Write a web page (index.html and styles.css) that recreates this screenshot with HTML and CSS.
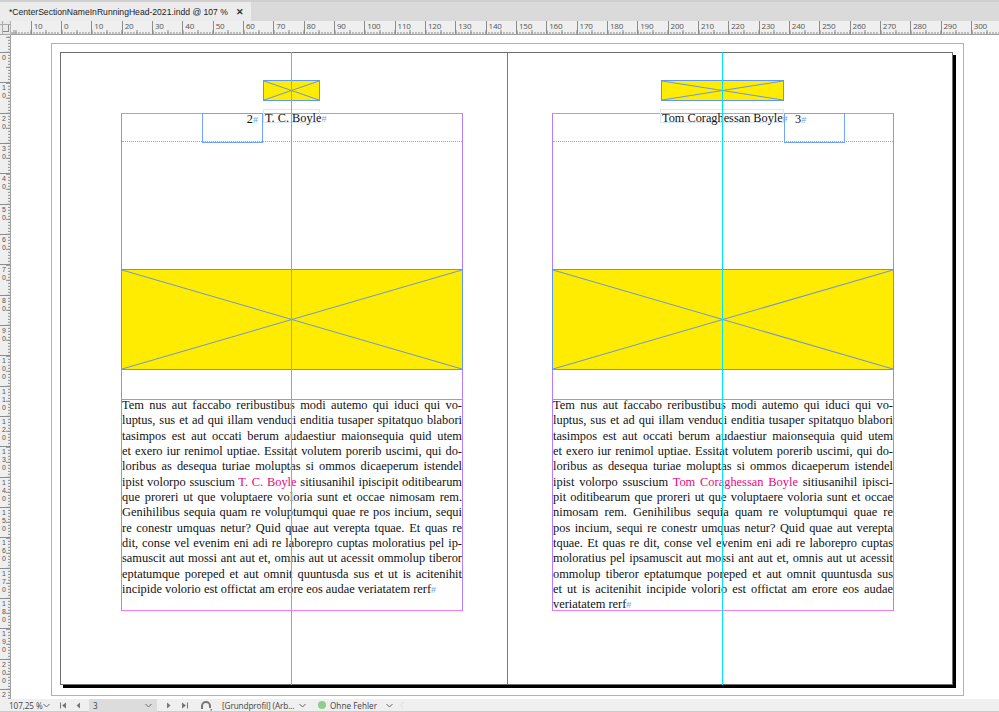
FILE: index.html
```html
<!DOCTYPE html>
<html>
<head>
<meta charset="utf-8">
<link rel="stylesheet" href="styles.css">
</head>
<body>
<div class="app">
  <div class="tabbar">
    <div class="tab"><span class="tab-title">*CenterSectionNameInRunningHead-2021.indd @ 107 %</span><span class="tab-close">&#x2715;</span></div>
  </div>
  <div class="hrow">
    <div class="corner"><svg width="11" height="14" viewBox="0 0 11 14"><rect x="2.5" y="3.5" width="6" height="7" fill="none" stroke="#8a8a8a"/><line x1="0" y1="3.5" x2="11" y2="3.5" stroke="#aaa"/><line x1="2.5" y1="0" x2="2.5" y2="14" stroke="#aaa"/></svg></div>
    <div class="hruler">
      <div class="hspacer"></div>
      <div class="hcell">10</div><div class="hcell">0</div><div class="hcell">10</div><div class="hcell">20</div><div class="hcell">30</div><div class="hcell">40</div><div class="hcell">50</div><div class="hcell">60</div><div class="hcell">70</div><div class="hcell">80</div><div class="hcell">90</div><div class="hcell">100</div><div class="hcell">110</div><div class="hcell">120</div><div class="hcell">130</div><div class="hcell">140</div><div class="hcell">150</div><div class="hcell">160</div><div class="hcell">170</div><div class="hcell">180</div><div class="hcell">190</div><div class="hcell">200</div><div class="hcell">210</div><div class="hcell">220</div><div class="hcell">230</div><div class="hcell">240</div><div class="hcell">250</div><div class="hcell">260</div><div class="hcell">270</div><div class="hcell">280</div><div class="hcell">290</div><div class="hcell">300</div><div class="hcell"></div>
    </div>
  </div>
  <div class="work">
    <div class="vruler">
      <div class="vspacer"></div>
      <div class="vcell"><span>0</span></div>
      <div class="vcell"><span>1</span><span>0</span></div>
      <div class="vcell"><span>2</span><span>0</span></div>
      <div class="vcell"><span>3</span><span>0</span></div>
      <div class="vcell"><span>4</span><span>0</span></div>
      <div class="vcell"><span>5</span><span>0</span></div>
      <div class="vcell"><span>6</span><span>0</span></div>
      <div class="vcell"><span>7</span><span>0</span></div>
      <div class="vcell"><span>8</span><span>0</span></div>
      <div class="vcell"><span>9</span><span>0</span></div>
      <div class="vcell"><span>1</span><span>0</span><span>0</span></div>
      <div class="vcell"><span>1</span><span>1</span><span>0</span></div>
      <div class="vcell"><span>1</span><span>2</span><span>0</span></div>
      <div class="vcell"><span>1</span><span>3</span><span>0</span></div>
      <div class="vcell"><span>1</span><span>4</span><span>0</span></div>
      <div class="vcell"><span>1</span><span>5</span><span>0</span></div>
      <div class="vcell"><span>1</span><span>6</span><span>0</span></div>
      <div class="vcell"><span>1</span><span>7</span><span>0</span></div>
      <div class="vcell"><span>1</span><span>8</span><span>0</span></div>
      <div class="vcell"><span>1</span><span>9</span><span>0</span></div>
      <div class="vcell"><span>2</span><span>0</span><span>0</span></div>
      <div class="vcell"><span>2</span><span>1</span><span>0</span></div>
    </div>
    <div class="canvas">
      <div class="bleed">
        <div class="spread">
          <div class="page page-left">
            <div class="margin-box"></div>
            <div class="dotted"></div>
            <div class="frame-y small">
              <svg class="x" viewBox="0 0 100 100" preserveAspectRatio="none"><line x1="0" y1="0" x2="100" y2="100"/><line x1="100" y1="0" x2="0" y2="100"/></svg>
            </div>
            <div class="num-frame"><div class="num-text">2<span class="hid">#</span></div></div>
            <div class="title-frame"><div class="title-text">T. C. Boyle<span class="hid">#</span></div></div>
            <div class="frame-y big">
              <svg class="x" viewBox="0 0 100 100" preserveAspectRatio="none"><line x1="0" y1="0" x2="100" y2="100"/><line x1="100" y1="0" x2="0" y2="100"/></svg>
            </div>
            <div class="textframe">
              <div class="body">
                <div class="ln">Tem nus aut faccabo reribustibus modi autemo qui iduci qui vo-</div>
                <div class="ln">luptus, sus et ad qui illam venduci enditia tusaper spitatquo blabori</div>
                <div class="ln">tasimpos est aut occati berum audaestiur maionsequia quid utem</div>
                <div class="ln">et exero iur renimol uptiae. Essitat volutem porerib uscimi, qui do-</div>
                <div class="ln">loribus as desequa turiae moluptas si ommos dicaeperum istendel</div>
                <div class="ln">ipist volorpo ssuscium <span class="pink">T. C. Boyle</span> sitiusanihil ipiscipit oditibearum</div>
                <div class="ln">que proreri ut que voluptaere voloria sunt et occae nimosam rem.</div>
                <div class="ln">Genihilibus sequia quam re voluptumqui quae re pos incium, sequi</div>
                <div class="ln">re conestr umquas netur? Quid quae aut verepta tquae. Et quas re</div>
                <div class="ln">dit, conse vel evenim eni adi re laborepro cuptas moloratius pel ip-</div>
                <div class="ln">samuscit aut mossi ant aut et, omnis aut ut acessit ommolup tiberor</div>
                <div class="ln">eptatumque poreped et aut omnit quuntusda sus et ut is acitenihit</div>
                <div class="ln last">incipide volorio est offictat am erore eos audae veriatatem rerf<span class="hid">#</span></div>
              </div>
            </div>
            <div class="guide-cyan"></div>
          </div>
          <div class="page page-right">
            <div class="margin-box"></div>
            <div class="dotted"></div>
            <div class="frame-y small">
              <svg class="x" viewBox="0 0 100 100" preserveAspectRatio="none"><line x1="0" y1="0" x2="100" y2="100"/><line x1="100" y1="0" x2="0" y2="100"/></svg>
            </div>
            <div class="title-frame"><div class="title-text">Tom Coraghessan Boyle<span class="hid">#</span></div></div>
            <div class="num-frame"><div class="num-text">3<span class="hid">#</span></div></div>
            <div class="frame-y big">
              <svg class="x" viewBox="0 0 100 100" preserveAspectRatio="none"><line x1="0" y1="0" x2="100" y2="100"/><line x1="100" y1="0" x2="0" y2="100"/></svg>
            </div>
            <div class="textframe">
              <div class="body">
                <div class="ln">Tem nus aut faccabo reribustibus modi autemo qui iduci qui vo-</div>
                <div class="ln">luptus, sus et ad qui illam venduci enditia tusaper spitatquo blabori</div>
                <div class="ln">tasimpos est aut occati berum audaestiur maionsequia quid utem</div>
                <div class="ln">et exero iur renimol uptiae. Essitat volutem porerib uscimi, qui do-</div>
                <div class="ln">loribus as desequa turiae moluptas si ommos dicaeperum istendel</div>
                <div class="ln">ipist volorpo ssuscium <span class="pink">Tom Coraghessan Boyle</span> sitiusanihil ipisci-</div>
                <div class="ln">pit oditibearum que proreri ut que voluptaere voloria sunt et occae</div>
                <div class="ln">nimosam rem. Genihilibus sequia quam re voluptumqui quae re</div>
                <div class="ln">pos incium, sequi re conestr umquas netur? Quid quae aut verepta</div>
                <div class="ln">tquae. Et quas re dit, conse vel evenim eni adi re laborepro cuptas</div>
                <div class="ln">moloratius pel ipsamuscit aut mossi ant aut et, omnis aut ut acessit</div>
                <div class="ln">ommolup tiberor eptatumque poreped et aut omnit quuntusda sus</div>
                <div class="ln">et ut is acitenihit incipide volorio est offictat am erore eos audae</div>
                <div class="ln last">veriatatem rerf<span class="hid">#</span></div>
              </div>
            </div>
            <div class="guide-cyan"></div>
          </div>
        </div>
      </div>
    </div>
  </div>
  <div class="status">
    <span class="zoomval">107,25 %</span>
    <svg class="chev c1" width="7" height="5" viewBox="0 0 7 5"><path d="M0.5 1 L3.5 4 L6.5 1" fill="none" stroke="#666"/></svg>
    <svg class="nav n1" width="6" height="7" viewBox="0 0 6 7"><rect x="0" y="0.5" width="1" height="6" fill="#777"/><path d="M6 0.5 L2 3.5 L6 6.5 Z" fill="#777"/></svg>
    <svg class="nav n2" width="5" height="7" viewBox="0 0 5 7"><path d="M4 0.5 L0.5 3.5 L4 6.5 Z" fill="#777"/></svg>
    <div class="pagefield"><span>3</span><svg width="7" height="5" viewBox="0 0 7 5"><path d="M0.5 1 L3.5 4 L6.5 1" fill="none" stroke="#666"/></svg></div>
    <svg class="nav n3" width="5" height="7" viewBox="0 0 5 7"><path d="M1 0.5 L4.5 3.5 L1 6.5 Z" fill="#777"/></svg>
    <svg class="nav n4" width="6" height="7" viewBox="0 0 6 7"><path d="M0 0.5 L4 3.5 L0 6.5 Z" fill="#777"/><rect x="5" y="0.5" width="1" height="6" fill="#777"/></svg>
    <svg class="openicon" width="12" height="11" viewBox="0 0 12 11"><path d="M2 9 L2 6 A4 4 0 0 1 10 6 L10 8" fill="none" stroke="#777" stroke-width="2"/><rect x="10.5" y="9" width="1.5" height="1.5" fill="#777"/></svg>
    <span class="profile">[Grundprofil] (Arb...</span>
    <svg class="chev c2" width="7" height="5" viewBox="0 0 7 5"><path d="M0.5 1 L3.5 4 L6.5 1" fill="none" stroke="#666"/></svg>
    <span class="okdot"></span>
    <span class="oktext">Ohne Fehler</span>
    <svg class="chev c3" width="7" height="5" viewBox="0 0 7 5"><path d="M0.5 1 L3.5 4 L6.5 1" fill="none" stroke="#666"/></svg>
    <svg class="chev c4" width="4" height="7" viewBox="0 0 4 7"><path d="M3.5 0.5 L0.5 3.5 L3.5 6.5" fill="none" stroke="#ddd"/></svg>
  </div>
</div>
</body>
</html>
```
FILE: styles.css
```css
* { box-sizing: border-box; }
html, body { margin: 0; padding: 0; }
body { width: 999px; height: 712px; overflow: hidden; background: #fff; font-family: "Open Sans", "Noto Sans", sans-serif; }
.app { display: flex; flex-direction: column; width: 999px; height: 712px; }

/* tab bar */
.tabbar { height: 21px; flex: none; background: #dadada; border-top: 2px solid #cfcfcf; display: flex; }
.tab { width: 251px; height: 19px; background: #ececec; display: flex; align-items: center; padding-left: 9px; white-space: nowrap; overflow: hidden; }
.tab-title { font-family: "Liberation Sans", Arial, sans-serif; font-size: 8.6px; color: #222; white-space: nowrap; }
.tab-close { font-size: 8.5px; color: #333; margin-left: 8px; font-weight: bold; }

/* horizontal ruler */
.hrow { height: 14px; flex: none; display: flex; }
.corner { width: 11px; height: 14px; background: #e8e8e8; border-right: 1px solid #b4b4b4; border-bottom: 1px solid #a8a8a8; }
.corner svg { display: block; }
.hruler {
  flex: 1; height: 14px; display: flex; overflow: hidden;
  background-color: #efefef;
  border-bottom: 1px solid #a0a0a0;
  background-image:
    repeating-linear-gradient(to right, #8c8c8c 0 1px, transparent 1px 3.0333px),
    repeating-linear-gradient(to right, #8c8c8c 0 1px, transparent 1px 15.1667px);
  background-size: 100% 2px, 100% 4px;
  background-position: 1.47px 11px, 4.5px 9px;
  background-repeat: repeat-x;
}
.hspacer { width: 19.67px; flex: none; }
.hcell { width: 30.333px; flex: none; border-left: 1px solid #8c8c8c; height: 13px; font-size: 8px; line-height: 10px; color: #555; padding-left: 2px; white-space: nowrap; font-family: "Open Sans", sans-serif; letter-spacing: -0.2px; }

/* work area */
.work { flex: 1; display: flex; min-height: 0; }
.vruler {
  width: 11px; flex: none; overflow: hidden;
  background-color: #efefef;
  border-right: 1px solid #a0a0a0;
  background-image:
    repeating-linear-gradient(to bottom, #8c8c8c 0 1px, transparent 1px 3.0333px),
    repeating-linear-gradient(to bottom, #8c8c8c 0 1px, transparent 1px 15.1667px);
  background-size: 2px 100%, 4px 100%;
  background-position: 8px 1.83px, 6px 1.83px;
  background-repeat: repeat-y;
}
.vspacer { height: 17px; }
.vcell { height: 30.333px; border-top: 1px solid #8c8c8c; width: 10px; display: flex; flex-direction: column; padding: 1px 0 0 1px; }
.vcell span { font-size: 7px; line-height: 8px; height: 8px; color: #555; width: 6px; text-align: center; font-family: "Liberation Sans", sans-serif; }

.canvas { flex: 1; background: #fff; position: relative; overflow: hidden; }
.bleed { margin: 8px 0 0 40px; width: 913px; height: 653px; border: 1px solid #ff8e9e; padding: 8px 0 0 8px; }
.spread { width: 893px; height: 633px; border: 1px solid #6e6e6e; box-shadow: 3px 3px 0 #000; display: flex; background: #fff; }
.page { position: relative; height: 100%; }
.page-left { width: 446px; }
.page-right { width: 445px; border-left: 1px solid #7a7a7a; }

.guide-cyan { position: absolute; top: -1px; bottom: -1px; width: 1px; border-left: 1px solid #00e5f5; z-index: 10; }
.page-left .guide-cyan { left: 230px; }
.page-right .guide-cyan { left: 214px; }

.margin-box { position: absolute; top: 60px; width: 342px; height: 498px; border-left: 1px solid #b57dff; border-right: 1px solid #b57dff; border-top: 1px solid #ff70f4; border-bottom: 1px solid #f47cf0; }
.page-left .margin-box { left: 60px; }
.page-right .margin-box { left: 44px; }

.dotted { position: absolute; top: 88px; width: 340px; border-top: 1px dotted #7eaaff; }
.page-left .dotted { left: 61px; }
.page-right .dotted { left: 45px; }

.frame-y { position: absolute; background: #ffec00; border: 1px solid #5d97f3; z-index: 2; }
.frame-y .x { position: absolute; left: 0; top: 0; width: 100%; height: 100%; }
.frame-y .x line { stroke: #6c96d8; stroke-width: 1; vector-effect: non-scaling-stroke; }
.page-left .small { left: 202px; top: 27px; width: 57px; height: 21px; }
.page-right .small { left: 153px; top: 27px; width: 123px; height: 21px; }
.big { top: 216px; width: 342px; height: 101px; }
.page-left .big { left: 60px; }
.page-right .big { left: 44px; }

.num-frame { position: absolute; top: 60px; width: 61px; height: 30px; border: 1px solid #6fa5ff; z-index: 3; }
.page-left .num-frame { left: 141px; }
.page-right .num-frame { left: 276px; }
.num-text { font-family: "Liberation Serif", serif; font-size: 12.3px; line-height: 14px; margin-top: -2px; color: #111; white-space: nowrap; }
.page-left .num-text { text-align: right; padding-right: 4px; }
.page-right .num-text { padding-left: 10px; }

.title-frame { position: absolute; top: 56px; height: 14px; border: 1px solid #d7e5ff; z-index: 3; }
.page-left .title-frame { left: 202px; width: 57px; }
.page-right .title-frame { left: 152px; width: 124px; }
.title-text { font-family: "Liberation Serif", serif; font-size: 12.3px; line-height: 14px; margin-top: 1px; padding-left: 1px; color: #111; white-space: nowrap; }

.hid { color: #6d9ff2; font-family: "Liberation Sans", sans-serif; font-size: 9px; }

.textframe { position: absolute; top: 346px; width: 342px; height: 212px; border-top: 1px solid #7aa4ee; z-index: 1; }
.page-left .textframe { left: 60px; }
.page-right .textframe { left: 44px; }
.body { margin-top: -2px; padding: 0 0 0 1px; width: 341px; font-family: "Liberation Serif", serif; font-size: 12.4px; line-height: 15.33px; color: #111; }
.ln { text-align: justify; text-align-last: justify; word-spacing: -1px; }
.ln.last { text-align-last: left; word-spacing: 0; }
.pink { color: #e5087f; }

/* status bar */
.status { height: 13px; flex: none; background: #efefef; border-bottom: 1px solid #cdcdcd; display: flex; align-items: center; font-size: 8.2px; color: #444; font-family: "Open Sans", sans-serif; white-space: nowrap; }
.zoomval { margin-left: 9px; width: 33px; letter-spacing: -0.1px; }
.chev { flex: none; }
.c1 { margin-left: 1px; }
.nav { flex: none; }
.n1 { margin-left: 10px; }
.n2 { margin-left: 10px; }
.pagefield { margin-left: 8px; width: 68px; height: 13px; background: #dcdcdc; display: flex; align-items: center; justify-content: space-between; padding: 0 5px 0 4px; flex: none; }
.n3 { margin-left: 9px; }
.n4 { margin-left: 11px; }
.openicon { margin-left: 12px; flex: none; }
.profile { margin-left: 10px; width: 77px; letter-spacing: -0.1px; }
.c2 { margin-left: 0; }
.okdot { margin-left: 12px; width: 8px; height: 8px; border-radius: 50%; background: #8ccf8c; flex: none; }
.oktext { margin-left: 4px; width: 56px; }
.c3 { margin-left: 0; }
.c4 { margin-left: 7px; }
```
